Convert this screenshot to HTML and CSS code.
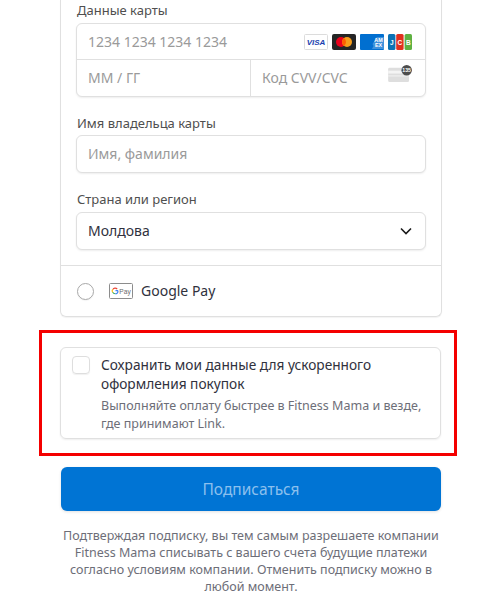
FILE: index.html
```html
<!DOCTYPE html>
<html lang="en">
<head>
  <meta charset="UTF-8">
  <meta name="viewport" content="width=device-width, initial-scale=1.0">
  <title>Подписка</title>
  <link rel="stylesheet" href="styles.css">
</head>
<body>
  <main class="page">
    <section class="pay-card">
      <div class="card-form">
        <div class="field-label">Данные карты</div>
        <div class="input-group">
          <div class="input-row">
            <span class="placeholder">1234 1234 1234 1234</span>
            <span class="brands">
              <svg class="brand" viewBox="0 0 24 16">
                <rect x=".5" y=".5" width="23" height="15" rx="1" fill="#fff" stroke="#dcdcdc"/>
                <text x="12" y="11" text-anchor="middle" class="visa-mark">VISA</text>
              </svg>
              <svg class="brand" viewBox="0 0 24 16">
                <rect width="24" height="16" rx="2" fill="#252525"/>
                <circle cx="9" cy="8" r="5" fill="#eb001b"/>
                <circle cx="15" cy="8" r="5" fill="#f79e1b"/>
                <path d="M12 4a5 5 0 0 1 0 8 5 5 0 0 1 0-8z" fill="#ff5f00"/>
              </svg>
              <svg class="brand" viewBox="0 0 24 16">
                <rect width="24" height="16" rx="1" fill="#016fd0"/>
                <path d="M12 15l1.5-3-1-2 2-3 1-3 2-1h6.500v12z" fill="#3f92dc"/>
                <text x="18.500" y="7.500" text-anchor="middle" class="amex-mark">AM</text>
                <text x="18.500" y="13" text-anchor="middle" class="amex-mark">EX</text>
              </svg>
              <svg class="brand" viewBox="0 0 24 16">
                <rect x="0" width="7.400" height="16" rx="1.500" fill="#0b72b5"/>
                <rect x="8.200" width="7.400" height="16" rx="1.500" fill="#e0301e"/>
                <rect x="16.600" width="7.400" height="16" rx="1.500" fill="#5fb142"/>
                <text x="3.700" y="10.500" text-anchor="middle" class="jcb-mark">J</text>
                <text x="11.900" y="10.500" text-anchor="middle" class="jcb-mark">C</text>
                <text x="20.300" y="10.500" text-anchor="middle" class="jcb-mark">B</text>
              </svg>
            </span>
          </div>
          <div class="input-split">
            <div class="input-cell"><span class="placeholder">ММ / ГГ</span></div>
            <div class="input-cell">
              <span class="placeholder">Код CVV/CVC</span>
              <svg class="cvc-icon" viewBox="0 0 26 20">
                <rect x="0" y="3" width="22" height="15" rx="1.500" fill="#dedede"/>
                <rect x="0" y="6" width="22" height="3" fill="#f4f4f4"/>
                <rect x="0" y="11" width="22" height="1" fill="#f4f4f4"/>
                <circle cx="19.500" cy="5.500" r="5.500" fill="#4d4d4d"/>
                <text x="19.500" y="7.600" text-anchor="middle" class="cvc-mark">135</text>
              </svg>
            </div>
          </div>
        </div>

        <div class="field-label label-name">Имя владельца карты</div>
        <div class="input-box"><span class="placeholder">Имя, фамилия</span></div>

        <div class="field-label label-country">Страна или регион</div>
        <div class="input-box select-box">
          <span class="select-value">Молдова</span>
          <svg class="chevron" viewBox="0 0 12 8">
            <path d="M1 1.500l5 5 5-5" fill="none" stroke="#1a1a1a" stroke-width="1.600"/>
          </svg>
        </div>
      </div>
      <div class="gpay-row">
        <span class="radio"></span>
        <svg class="gpay-badge" viewBox="0 0 24 16">
          <rect x=".5" y=".5" width="23" height="15" rx="1" fill="#fff" stroke="#8c8c8c"/>
          <path d="M9.200 7.600h-2.700M9 8a2.800 2.800 0 0 1-2.800 2.800" fill="none" stroke="#4285f4" stroke-width="1.100"/>
          <path d="M3.800 6.500a2.800 2.800 0 0 1 4.400-.5" fill="none" stroke="#ea4335" stroke-width="1.100"/>
          <path d="M3.600 6.400a2.800 2.800 0 0 0 0 3" fill="none" stroke="#fbbc04" stroke-width="1.100"/>
          <path d="M3.700 9.300a2.800 2.800 0 0 0 2.500 1.500" fill="none" stroke="#34a853" stroke-width="1.100"/>
          <text x="16" y="10.500" text-anchor="middle" class="gpay-mark">Pay</text>
        </svg>
        <span class="gpay-text">Google Pay</span>
      </div>
    </section>

    <section class="highlight">
      <div class="save-box">
        <span class="checkbox"></span>
        <div class="save-copy">
          <div class="save-title">Сохранить мои данные для ускоренного оформления покупок</div>
          <div class="save-note">Выполняйте оплату быстрее в Fitness Mama и везде, где принимают Link.</div>
        </div>
      </div>
    </section>

    <button class="submit" type="button">Подписаться</button>

    <p class="terms">Подтверждая подписку, вы тем самым разрешаете компании Fitness Mama списывать с вашего счета будущие платежи согласно условиям компании. Отменить подписку можно в любой момент.</p>
  </main>
</body>
</html>
```

FILE: styles.css
```css
* { box-sizing: border-box; }
html, body { margin: 0; height: 100%; overflow: hidden; }
body { background: #fff; font-family: "Noto Sans", "Open Sans", sans-serif; color: #30313d; }
.page { width: 498px; height: 599px; overflow: hidden; padding-left: 60px; padding-right: 56px; }

.pay-card {
  border: 1px solid #e0e0e0;
  border-top: 0;
  border-radius: 0 0 6px 6px;
  box-shadow: 0 1px 1px rgba(0, 0, 0, 0.05);
  height: 317px;
}
.card-form { padding: 0 15px; height: 266px; border-bottom: 1px solid #e0e0e0; }
.field-label { font-size: 13px; line-height: 20px; color: #4f4f4f; padding-left: 1px; }
.field-label:first-child { margin-bottom: 3px; }
.label-name { margin-top: 16px; margin-bottom: 2px; }
.label-country { margin-top: 16px; margin-bottom: 3px; }

.input-group, .input-box {
  background: #fff;
  border: 1px solid #e0e0e0;
  border-radius: 6px;
  box-shadow: 0 1px 2px rgba(0, 0, 0, 0.07);
}
.input-group { height: 74px; }
.input-row { height: 36px; display: flex; align-items: center; justify-content: space-between; padding: 0 13px 0 11px; border-bottom: 1px solid #e0e0e0; }
.input-split { display: flex; height: 36px; }
.input-cell { flex: 0 0 173px; display: flex; align-items: center; justify-content: space-between; padding: 0 12px 2px 11px; }
.input-cell + .input-cell { flex: 1; border-left: 1px solid #e0e0e0; }
.input-box { height: 38px; display: flex; align-items: center; padding: 0 12px 2px 11px; }
.placeholder { font-size: 14px; color: #9a9a9a; white-space: nowrap; }

.brands { display: flex; gap: 4px; }
.brand { width: 24px; height: 16px; display: block; }
.visa-mark { font: italic 700 8px "Liberation Sans", sans-serif; fill: #1a3fb0; }
.amex-mark { font: 700 5.400px "Liberation Sans", sans-serif; fill: #fff; }
.jcb-mark { font: 700 6.500px "Liberation Sans", sans-serif; fill: #fff; }
.cvc-icon { width: 25px; height: 19px; margin-top: -5px; }
.cvc-mark { font: 700 5.500px "Liberation Sans", sans-serif; fill: #fff; }

.select-box { justify-content: space-between; padding-right: 13px; }
.select-value { font-size: 14px; color: #30313d; }
.chevron { width: 12px; height: 8px; display: block; margin-top: 2px; }

.gpay-row { display: flex; align-items: center; height: 50px; padding-left: 16px; }
.radio { width: 17px; height: 17px; border: 1px solid #a8a8a8; border-radius: 50%; margin-right: 15px; box-shadow: 0 1px 1px rgba(0, 0, 0, 0.05); }
.gpay-badge { width: 24px; height: 16px; display: block; margin-right: 8px; }
.gpay-mark { font: 6.600px "Liberation Sans", sans-serif; fill: #6a6a6a; }
.gpay-text { font-size: 14px; color: #30313d; padding-bottom: 2px; }

.highlight {
  margin: 13px 0 0 -21px;
  width: 418px;
  height: 126px;
  border: 3px solid #f40000;
  padding: 14px 13px 0 18px;
}
.save-box {
  display: flex;
  height: 92px;
  border: 1px solid #e0e0e0;
  border-radius: 6px;
  box-shadow: 0 1px 2px rgba(0, 0, 0, 0.07);
  padding: 7px 10px 0 11px;
}
.checkbox { flex: none; width: 18px; height: 18px; margin-top: 1px; border: 1px solid #dedede; border-radius: 4px; margin-right: 11px; box-shadow: 0 1px 1px rgba(0, 0, 0, 0.06); }
.save-title { font-size: 13.700px; line-height: 19px; color: #30313d; }
.save-note { font-size: 12.500px; line-height: 18px; color: #6d6e78; margin-top: 4px; }

.submit {
  display: block;
  width: 380px;
  height: 44px;
  margin: 11px 0 0 1px;
  padding-bottom: 2px;
  border: 0;
  border-radius: 6px;
  background: #0074d4;
  color: #8cc0ee;
  font: 400 15.500px "Noto Sans", sans-serif;
  box-shadow: 0 1px 3px rgba(0, 0, 0, 0.12);
}
.terms { margin: 16px 0 0 1px; width: 380px; font-size: 12.500px; line-height: 17px; color: #6d6e78; text-align: center; }
```
